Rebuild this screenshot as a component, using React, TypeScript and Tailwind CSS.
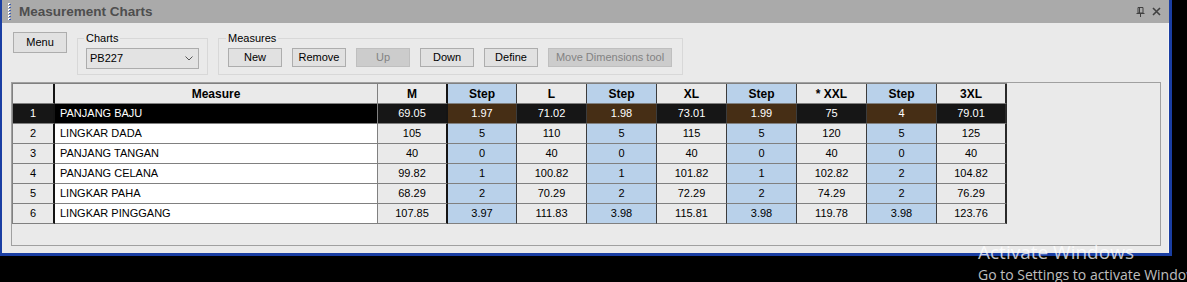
import React from 'react';

const headers = ['M', 'Step', 'L', 'Step', 'XL', 'Step', '* XXL', 'Step', '3XL'];

const rows: { name: string; vals: string[] }[] = [
  { name: 'PANJANG BAJU', vals: ['69.05', '1.97', '71.02', '1.98', '73.01', '1.99', '75', '4', '79.01'] },
  { name: 'LINGKAR DADA', vals: ['105', '5', '110', '5', '115', '5', '120', '5', '125'] },
  { name: 'PANJANG TANGAN', vals: ['40', '0', '40', '0', '40', '0', '40', '0', '40'] },
  { name: 'PANJANG CELANA', vals: ['99.82', '1', '100.82', '1', '101.82', '1', '102.82', '2', '104.82'] },
  { name: 'LINGKAR PAHA', vals: ['68.29', '2', '70.29', '2', '72.29', '2', '74.29', '2', '76.29'] },
  { name: 'LINGKAR PINGGANG', vals: ['107.85', '3.97', '111.83', '3.98', '115.81', '3.98', '119.78', '3.98', '123.76'] },
];

const colCls = [
  'w-[70px] border-r-2 border-r-[#141414]',
  'w-[69px] border-r border-r-[#3c3c3c]',
  'w-[70px] border-r border-r-[#3c3c3c]',
  'w-[70px] border-r border-r-[#3c3c3c]',
  'w-[70px] border-r border-r-[#3c3c3c]',
  'w-[70px] border-r border-r-[#3c3c3c]',
  'w-[70px] border-r border-r-[#3c3c3c]',
  'w-[70px] border-r border-r-[#3c3c3c]',
  'w-[70px] border-r-2 border-r-[#2a2a2a]',
];

const cellBase = 'h-[20px] border-b border-b-[#808080] flex items-center justify-center shrink-0';

function Btn({ label, w, disabled }: { label: string; w: string; disabled?: boolean }) {
  return (
    <div
      className={
        'h-[19px] flex items-center justify-center border text-[11px] leading-none ' +
        w +
        (disabled
          ? ' bg-[#cccccc] border-[#bfbfbf] text-[#838383]'
          : ' bg-[#e1e1e1] border-[#adadad] text-black')
      }
    >
      {label}
    </div>
  );
}

export default function App() {
  return (
    <div className="relative w-[1187px] h-[282px] bg-black overflow-hidden font-['Liberation_Sans',Arial,sans-serif]">
      <div className="w-[1172px] h-[256px] border-l-2 border-r-3 border-b-3 border-[#1a3ea3] flex flex-col">
        {/* Title bar */}
        <div className="h-[23px] bg-[#aaaaaa] flex items-center shrink-0">
          <svg width="3" height="18" viewBox="0 0 3 18" className="ml-[6px]">
            {[0, 1, 2, 3, 4, 5].map((i) => (
              <g key={i}>
                <rect x="0" y={i * 3} width="2" height="2" fill="#ffffff" />
                <rect x="1" y={i * 3 + 1} width="2" height="1" fill="#3a5db5" />
              </g>
            ))}
          </svg>
          <span className="ml-[8px] text-[13.5px] font-bold text-[#4e4e4e] leading-none">Measurement Charts</span>
          <div className="ml-auto flex items-center gap-[7px] mr-[8px]">
            <svg width="9" height="10" viewBox="0 0 9 10">
              <path d="M2 0.5H7V6H2Z M3.5 0.5V6" fill="none" stroke="#404040" strokeWidth="1" />
              <path d="M0.5 6.5H8.5 M4.5 6.5V10" fill="none" stroke="#404040" strokeWidth="1" />
            </svg>
            <svg width="9" height="9" viewBox="0 0 9 9">
              <path d="M1 1L8 8M8 1L1 8" stroke="#404040" strokeWidth="1.6" />
            </svg>
          </div>
        </div>

        {/* Body */}
        <div className="flex-1 bg-[#eaeaea] border-r border-[#f4f4f4]">
          {/* Toolbar */}
          <div className="flex items-start pt-[9px] pl-[11px] text-[11px] text-black">
            <div className="w-[54px] h-[21px] flex items-center justify-center border border-[#adadad] bg-[#e1e1e1]">
              Menu
            </div>
            <fieldset className="ml-[10px] w-[131px] border border-[#d8d8d8] px-[8px] pb-[5px]">
              <legend className="ml-[-2px] px-[2px] text-[11px] leading-[13px]">Charts</legend>
              <div className="mt-[3px] w-[113px] h-[21px] border border-[#acacac] bg-[#e3e3e3] flex items-center justify-between pl-[3px] pr-[5px]">
                <span>PB227</span>
                <svg width="8" height="5" viewBox="0 0 8 5">
                  <path d="M0.5 0.5L4 4L7.5 0.5" fill="none" stroke="#555" strokeWidth="1" />
                </svg>
              </div>
            </fieldset>
            <fieldset className="ml-[10px] w-[465px] border border-[#d8d8d8] pl-[9px] pr-[8px] pb-[7px]">
              <legend className="ml-[-2px] px-[2px] text-[11px] leading-[13px]">Measures</legend>
              <div className="mt-[3px] flex gap-[10px]">
                <Btn label="New" w="w-[54px]" />
                <Btn label="Remove" w="w-[54px]" />
                <Btn label="Up" w="w-[54px]" disabled />
                <Btn label="Down" w="w-[54px]" />
                <Btn label="Define" w="w-[54px]" />
                <Btn label="Move Dimensions tool" w="w-[124px]" disabled />
              </div>
            </fieldset>
          </div>

          {/* Grid panel */}
          <div className="ml-[9px] mt-[7px] w-[1150px] h-[164px] border border-[#a0a0a0]">
            <div className="inline-flex flex-col border-l border-t border-[#808080] text-[11px] text-black">
              {/* Header */}
              <div className="flex">
                <div className={cellBase + ' w-[42px] border-r-2 border-r-[#141414] bg-[#eaeaea]'} />
                <div className={cellBase + ' w-[323px] border-r border-r-[#808080] bg-[#eaeaea] font-bold text-[12px]'}>
                  Measure
                </div>
                {headers.map((h, i) => (
                  <div
                    key={i}
                    className={
                      cellBase +
                      ' font-bold text-[12px] ' +
                      colCls[i] +
                      (h === 'Step' ? ' bg-[#b9d1ea]' : ' bg-[#eaeaea]')
                    }
                  >
                    {h}
                  </div>
                ))}
              </div>
              {rows.map((r, ri) => {
                const sel = ri === 0;
                return (
                  <div key={ri} className="flex">
                    <div
                      className={
                        cellBase +
                        ' w-[42px] border-r-2 border-r-[#141414]' +
                        (sel ? ' bg-[#161616] text-white' : ' bg-[#eaeaea]')
                      }
                    >
                      {ri + 1}
                    </div>
                    <div
                      className={
                        cellBase +
                        ' w-[323px] border-r border-r-[#808080] !justify-start pl-[5px]' +
                        (sel ? ' bg-black text-white' : ' bg-white')
                      }
                    >
                      {r.name}
                    </div>
                    {r.vals.map((v, i) => {
                      const step = i % 2 === 1;
                      const bg = sel
                        ? step
                          ? ' bg-[#462e15] text-white'
                          : ' bg-[#161616] text-white'
                        : step
                        ? ' bg-[#b9d1ea]'
                        : ' bg-[#eaeaea]';
                      return (
                        <div key={i} className={cellBase + ' ' + colCls[i] + bg}>
                          {v}
                        </div>
                      );
                    })}
                  </div>
                );
              })}
            </div>
          </div>
        </div>
      </div>

      {/* Activation watermark */}
      <div className="absolute left-[978px] top-[243px] font-['Open_Sans','Noto_Sans',sans-serif] text-white/75 whitespace-nowrap">
        <div className="text-[19px] leading-none">Activate Windows</div>
        <div className="mt-[6px] text-[14px] leading-none">Go to Settings to activate Windows.</div>
      </div>
    </div>
  );
}
